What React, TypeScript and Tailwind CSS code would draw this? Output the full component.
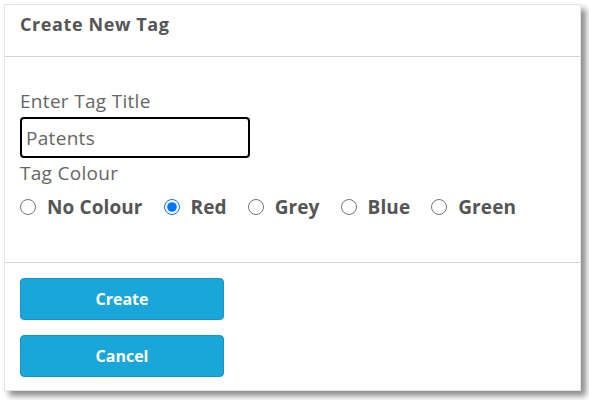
export default function App() {
  const colours = ['No Colour', 'Red', 'Grey', 'Blue', 'Green']

  return (
    <div className="w-[589px] h-[400px] bg-white pl-[4px] pt-[4px]" style={{ fontFamily: '"Open Sans", sans-serif' }}>
      <div className="w-[577px] h-[387px] bg-white border border-[#e4e4e4] shadow-[5px_5px_6px_rgba(0,0,0,0.45)] flex flex-col">
        {/* Header */}
        <div className="h-[52px] px-[15px] pt-[6px] border-b border-[#d4d4d4]">
          <h1 className="text-[18px] font-bold text-[#555] tracking-[0.6px]">Create New Tag</h1>
        </div>

        {/* Body */}
        <div className="h-[206px] px-[15px] pt-[32px] border-b border-[#d4d4d4] text-[#666]">
          <label className="block text-[19px] leading-[24px] tracking-[0.3px]">Enter Tag Title</label>
          <input
            defaultValue="Patents"
            className="mt-[4px] w-[230px] h-[41px] border-2 border-black rounded-[4px] px-[4px] text-[19px] tracking-[0.3px] text-[#666] outline-none"
          />
          <div className="mt-[3px] text-[19px] leading-[24px] tracking-[0.3px]">Tag Colour</div>
          <div className="mt-[8px] flex items-center gap-[21px]">
            {colours.map((c) => (
              <label key={c} className="flex items-center gap-[11px] text-[19px] font-bold text-[#555] tracking-[0.1px]">
                <input
                  type="radio"
                  name="colour"
                  defaultChecked={c === 'Red'}
                  className="w-[16px] h-[16px] accent-[#0075ff] m-0"
                />
                {c}
              </label>
            ))}
          </div>
        </div>

        {/* Actions */}
        <div className="px-[15px] pt-[15px] flex flex-col gap-[15px]">
          <button className="w-[204px] h-[42px] rounded-[4px] bg-[#1ba6d9] border border-[#1895c4] text-white text-[16px] font-bold">
            Create
          </button>
          <button className="w-[204px] h-[42px] rounded-[4px] bg-[#1ba6d9] border border-[#1895c4] text-white text-[16px] font-bold">
            Cancel
          </button>
        </div>
      </div>
    </div>
  )
}
